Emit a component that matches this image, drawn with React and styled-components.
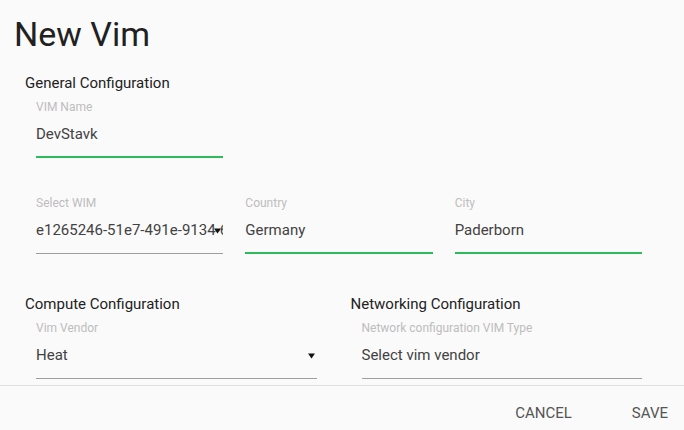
import React from "react";
import styled, { createGlobalStyle } from "styled-components";

const Global = createGlobalStyle`
  html, body { margin: 0; padding: 0; background: #fafafa; }
  body { font-family: Roboto, "Liberation Sans", Arial, sans-serif; }
  * { box-sizing: border-box; }
`;

const Page = styled.div`
  width: 684px;
  height: 430px;
  display: flex;
  flex-direction: column;
  background: #fafafa;
  overflow: hidden;
`;

const Title = styled.h1`
  margin: 0;
  padding: 14px 0 0 14px;
  font-size: 34px;
  line-height: 40px;
  font-weight: 400;
  color: #212121;
`;

const Content = styled.div`
  flex: 1;
  min-height: 0;
  overflow: hidden;
  padding: 0 31px 0 25px;
`;

const Section = styled.section`
  margin-top: ${(p) => p.$top}px;
`;

const SectionTitle = styled.h2`
  margin: 0 0 6px;
  font-size: 15px;
  line-height: 20px;
  font-weight: 400;
  color: #222;
`;

const ThirdRow = styled.div`
  display: grid;
  grid-template-columns: repeat(3, 1fr);
  margin-top: ${(p) => p.$top || 0}px;
`;

const HalfRow = styled.div`
  display: grid;
  grid-template-columns: 1fr 1fr;
  column-gap: 23px;
`;

const Field = styled.div`
  margin: 0 11px;
  min-width: 0;
`;

const Label = styled.div`
  font-size: 12px;
  line-height: 16px;
  color: #bdbdbd;
  white-space: nowrap;
`;

const Value = styled.div`
  position: relative;
  margin-top: 9px;
  padding-bottom: ${(p) => (p.$active ? 12 : 13)}px;
  font-size: 15px;
  line-height: 20px;
  color: #424242;
  white-space: nowrap;
  overflow: hidden;
  border-bottom: ${(p) => (p.$active ? "2px solid #2dbb5b" : "1px solid #9e9e9e")};
`;

const Arrow = styled.svg`
  position: absolute;
  right: 2px;
  top: 8px;
  width: 7px;
  height: 6px;
`;

const Footer = styled.div`
  height: 45px;
  flex-shrink: 0;
  border-top: 1px solid #e0e0e0;
  display: flex;
  justify-content: flex-end;
  align-items: flex-start;
  gap: 44px;
  padding: 17px 8px 0 0;
`;

const FooterButton = styled.button`
  border: 0;
  background: none;
  padding: 0 8px;
  margin: 0;
  font-family: Roboto, "Liberation Sans", Arial, sans-serif;
  font-size: 15px;
  line-height: 20px;
  color: #555;
  text-transform: uppercase;
  cursor: pointer;
`;

const DropArrow = () => (
  <Arrow viewBox="0 0 7 6">
    <path d="M0 0.5 H7 L3.5 5.5 Z" fill="#111" />
  </Arrow>
);

function TextField({ label, value, active, select }) {
  return (
    <Field>
      <Label>{label}</Label>
      <Value $active={active}>
        {value}
        {select && <DropArrow />}
      </Value>
    </Field>
  );
}

export default function App() {
  return (
    <>
      <Global />
      <Page>
        <Title>New Vim</Title>
        <Content>
          <Section $top={19}>
            <SectionTitle>General Configuration</SectionTitle>
            <ThirdRow>
              <TextField label="VIM Name" value="DevStavk" active />
            </ThirdRow>
            <ThirdRow $top={37}>
              <TextField
                label="Select WIM"
                value="e1265246-51e7-491e-9134-6c0b8d2f3a1e"
                select
              />
              <TextField label="Country" value="Germany" active />
              <TextField label="City" value="Paderborn" active />
            </ThirdRow>
          </Section>
          <Section $top={40}>
            <HalfRow>
              <div>
                <SectionTitle>Compute Configuration</SectionTitle>
                <TextField label="Vim Vendor" value="Heat" select />
              </div>
              <div>
                <SectionTitle>Networking Configuration</SectionTitle>
                <TextField
                  label="Network configuration VIM Type"
                  value="Select vim vendor"
                />
              </div>
            </HalfRow>
          </Section>
        </Content>
        <Footer>
          <FooterButton>Cancel</FooterButton>
          <FooterButton>Save</FooterButton>
        </Footer>
      </Page>
    </>
  );
}
